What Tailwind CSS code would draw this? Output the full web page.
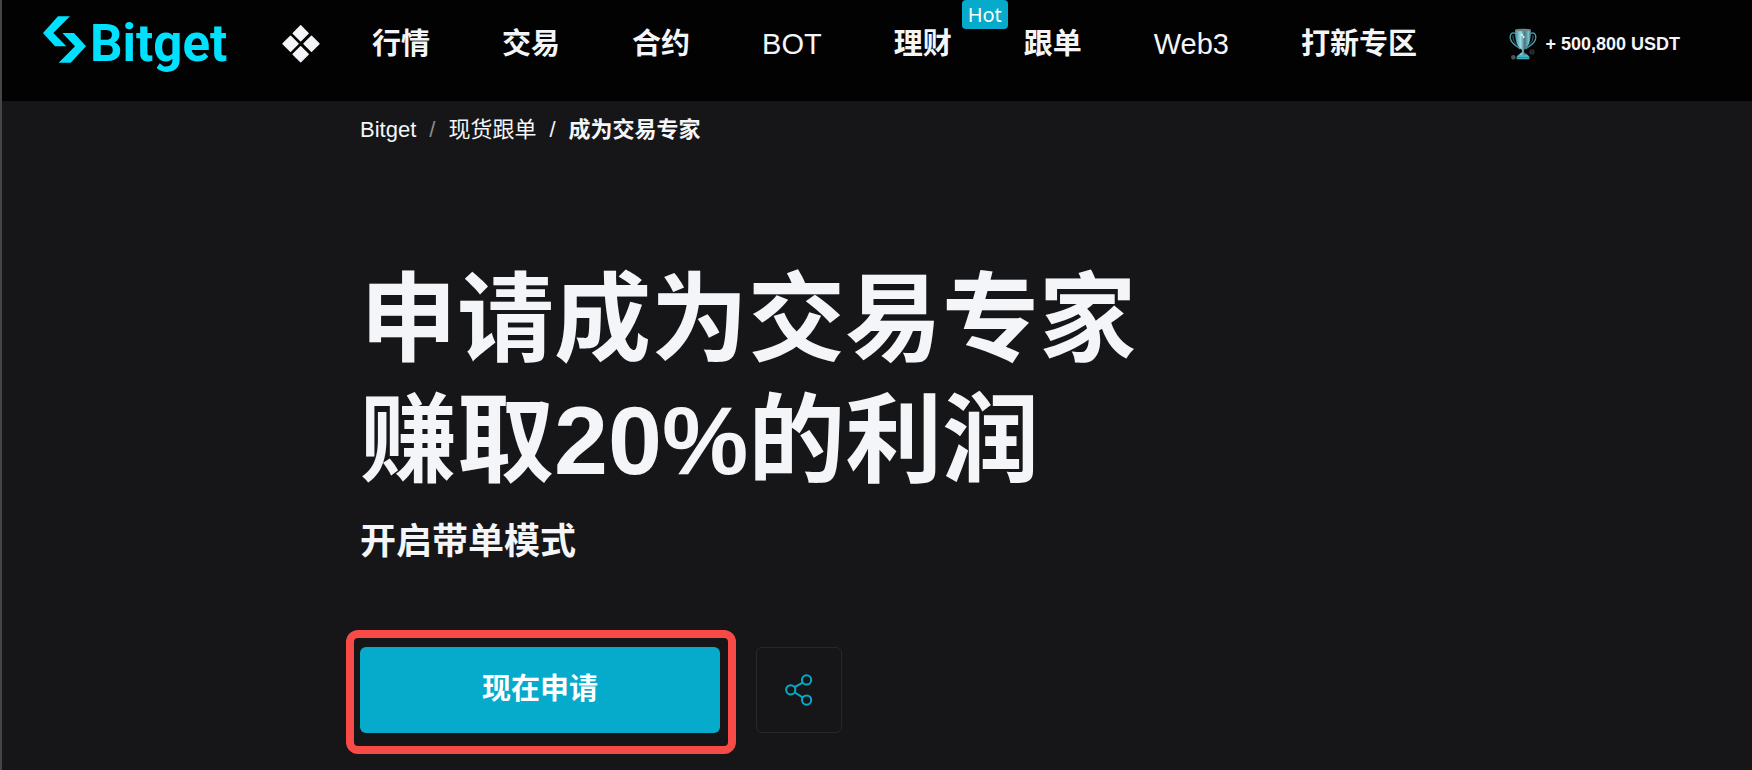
<!DOCTYPE html>
<html lang="zh-CN">
<head>
  <meta charset="UTF-8" />
  <meta name="viewport" content="width=device-width, initial-scale=1.0" />
  <title>成为交易专家 - Bitget</title>
  <script src="https://cdn.jsdelivr.net/npm/@tailwindcss/browser@4"></script>
</head>
<body class="bg-[#161618] min-h-screen border-l-2 border-[#454545] text-[#f4f5f8] font-['Liberation_Sans','Noto_Sans_CJK_SC',sans-serif]">

  <!-- Header -->
  <header class="bg-[#020202] flex items-center pt-4 pb-[29px] pl-[41px] pr-[72px]">
    <a href="#" class="w-[187px] flex items-start gap-1 text-[#00e1ff]">
      <svg class="w-[43px] h-[47px]" viewBox="129 48 129 141" fill="currentColor" aria-hidden="true">
        <path d="M174 49H210L160 99L199 139H165L129 99Z" />
        <path d="M187 99H222L258 139L212 188H176L225 139Z" />
      </svg>
      <span class="text-[51px] leading-14 font-bold font-['Roboto',sans-serif]">Bitget</span>
    </a>

    <button type="button" class="ml-[52px]" aria-label="全部产品">
      <svg class="w-[38px] h-[38px]" viewBox="845 74 116 115" fill="#f4f5f8" stroke="#f4f5f8" stroke-width="4" stroke-linejoin="round">
        <path d="M902 76L925 99L902 122L879 99Z" />
        <path d="M871 108L894 131L871 154L848 131Z" />
        <path d="M935 108L958 131L935 154L912 131Z" />
        <path d="M902 140L925 163L902 186L879 163Z" />
      </svg>
    </button>

    <nav class="ml-[52px] flex items-center gap-[72px] text-[29px] leading-10 whitespace-nowrap">
      <a href="#" class="font-bold">行情</a>
      <a href="#" class="font-bold">交易</a>
      <a href="#" class="font-bold">合约</a>
      <a href="#">BOT</a>
      <a href="#" class="relative font-bold">理财
        <span class="absolute -top-6 left-[68px] bg-[#06aacb] text-white rounded-sm px-[6px] text-[20px] leading-[29px] font-normal font-['Noto_Sans',sans-serif]">Hot</span>
      </a>
      <a href="#" class="font-bold">跟单</a>
      <a href="#">Web3</a>
      <a href="#" class="font-bold">打新专区</a>
    </nav>

    <a href="#" class="ml-auto flex items-center gap-2 text-[18px] leading-6 font-bold whitespace-nowrap">
      <svg class="w-7 h-8" viewBox="0 0 84 96" aria-hidden="true">
        <defs>
          <linearGradient id="cup" x1="0" x2="1">
            <stop offset="0" stop-color="#3f8a96" />
            <stop offset=".35" stop-color="#9adfe8" />
            <stop offset=".6" stop-color="#4f7480" />
            <stop offset=".85" stop-color="#74c3cf" />
            <stop offset="1" stop-color="#3a6a74" />
          </linearGradient>
        </defs>
        <path d="M20 18C10 10 2 18 4 32C7 48 20 52 34 63M64 18C74 10 82 18 80 32C77 48 64 52 50 63" fill="none" stroke="#4ba3b1" stroke-width="4" />
        <path d="M12 22C11 38 18 46 30 54M72 22C73 38 66 46 54 54" fill="none" stroke="#346f7a" stroke-width="3" />
        <path d="M18 6H66C67 32 61 56 45 66V72L56 82H28L39 72V66C23 56 17 32 18 6Z" fill="url(#cup)" />
        <ellipse cx="42" cy="6" rx="24" ry="4" fill="#6d868b" />
        <path d="M37 17H42L40 21L48 26L45 30H40L43 26L35 21Z" fill="#e2f6f8" />
        <path d="M28 80H56L61 86V94H23V86Z" fill="#43b8c6" />
        <path d="M23 89H61" stroke="#1d7482" stroke-width="2" />
        <circle cx="13" cy="88" r="7" fill="#505254" />
        <circle cx="69" cy="72" r="8" fill="#303234" />
        <path d="M63 69H74M66 76H74M69 65V79" stroke="#151617" stroke-width="2" />
      </svg>
      <span>+ 500,800 USDT</span>
    </a>
  </header>

  <main class="max-w-[1034px] mx-auto pt-[15px]">
    <!-- Breadcrumb -->
    <nav class="flex text-[22px] leading-7" aria-label="Breadcrumb">
      <a href="#">Bitget</a>
      <span class="mx-[13px] text-[#8b8c90]">/</span>
      <a href="#">现货跟单</a>
      <span class="mx-[13px]">/</span>
      <span class="font-bold">成为交易专家</span>
    </nav>

    <!-- Hero -->
    <h1 class="mt-[115px] text-[97px] leading-[121px] font-bold whitespace-nowrap">申请成为交易专家<br />赚取20%的利润</h1>
    <p class="mt-[17px] text-[36px] leading-12 font-bold">开启带单模式</p>

    <div class="mt-[81px] mb-9 flex gap-9">
      <div class="relative">
        <button type="button" class="w-[360px] h-[86px] rounded-md bg-[#06aacb] text-white text-[29px] font-bold">现在申请</button>
        <div class="absolute -top-[17px] -bottom-[21px] -left-[14px] -right-4 border-8 border-[#f84b48] rounded-xl pointer-events-none"></div>
      </div>
      <button type="button" class="w-[86px] h-[86px] rounded-md border border-[#28282b] flex items-center justify-center" aria-label="分享">
        <svg class="w-7 h-8" viewBox="76 71 84 97" fill="none" stroke="#08aaca" stroke-width="6">
          <circle cx="141" cy="89" r="14" />
          <circle cx="93" cy="119" r="14" />
          <circle cx="141" cy="150" r="14" />
          <path d="M105 111L129 97M105 127L129 142" />
        </svg>
      </button>
    </div>
  </main>
</body>
</html>
